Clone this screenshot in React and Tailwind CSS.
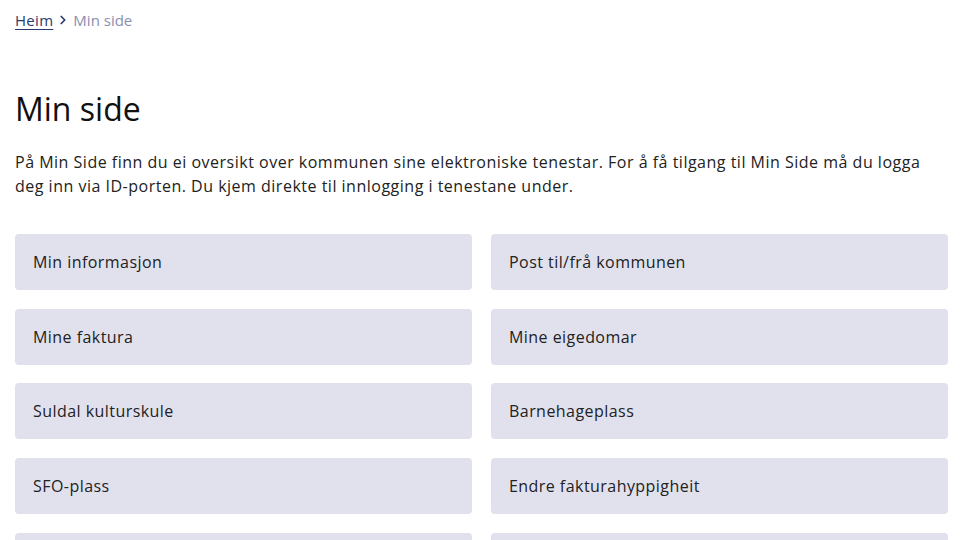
import React from "react";

const items = [
  "Min informasjon",
  "Post til/frå kommunen",
  "Mine faktura",
  "Mine eigedomar",
  "Suldal kulturskule",
  "Barnehageplass",
  "SFO-plass",
  "Endre fakturahyppigheit",
  "",
  "",
];

export default function App() {
  return (
    <div
      className="w-[960px] h-[540px] overflow-hidden bg-white text-[#1f1f1f]"
      style={{ fontFamily: '"Open Sans", "Noto Sans", sans-serif' }}
    >
      <div className="pl-[15px] pr-[12px]">
        <nav className="pt-[10px] flex items-center text-[15px] leading-[20px]">
          <a className="text-[#2b3a6e] underline underline-offset-[3px] decoration-[1px] tracking-[0.3px]">Heim</a>
          <svg width="14" height="14" viewBox="0 0 24 24" className="mx-[3px] text-[#2b3a6e]">
            <path d="M9 6l6 6-6 6" fill="none" stroke="currentColor" strokeWidth="3" strokeLinecap="round" strokeLinejoin="round" />
          </svg>
          <span className="text-[#8890b0]">Min side</span>
        </nav>
        <h1 className="mt-[59px] text-[32px] leading-[40px] font-normal text-[#111]">Min side</h1>
        <p className="mt-[21px] text-[16px] leading-[24px] tracking-[0.5px] text-[#222]">
          På Min Side finn du ei oversikt over kommunen sine elektroniske tenestar. For å få tilgang til Min Side må du logga deg inn via ID-porten. Du kjem direkte til innlogging i tenestane under.
        </p>
        <div className="mt-[36px] grid grid-cols-2 gap-x-[19px] gap-y-[18.67px]">
          {items.map((t, i) => (
            <a
              key={i}
              className="h-[56px] flex items-center px-[18px] rounded-[4px] bg-[#e1e1ee] text-[16px] tracking-[0.45px] text-[#222]"
            >
              {t}
            </a>
          ))}
        </div>
      </div>
    </div>
  );
}
